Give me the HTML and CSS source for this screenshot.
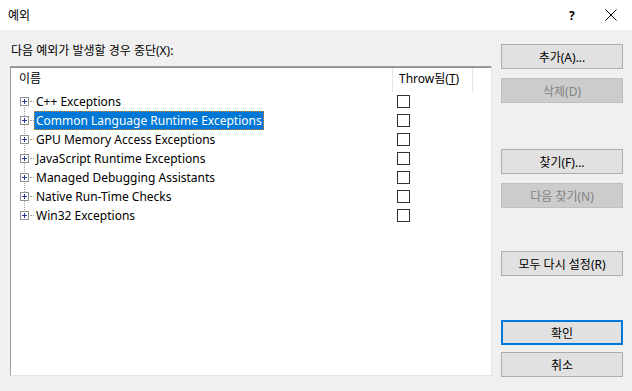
FILE: index.html
```html
<!DOCTYPE html>
<html lang="ko">
<head>
    <meta charset="UTF-8">
    <title>예외</title>
    <link rel="stylesheet" href="styles.css">
</head>
<body>
    <div class="dialog">
        <div class="title-bar">
            <span class="title">예외</span>
            <span class="title-help">?</span>
            <span class="title-close">
                <svg width="12" height="12" viewBox="0 0 12 12"><path d="M0.5 0.5 L11.5 11.5 M11.5 0.5 L0.5 11.5" stroke="#000" stroke-width="1" fill="none"/></svg>
            </span>
        </div>
        <div class="content">
            <div class="left-pane">
                <div class="list-label">다음 예외가 발생할 경우 중단(X):</div>
                <div class="list-box">
                    <div class="list-header">
                        <div class="col-name">이름</div>
                        <div class="col-throw">Throw됨(<u>T</u>)</div>
                        <div class="col-rest"></div>
                    </div>
                    <div class="tree">
                        <div class="tree-line"></div>
                        <div class="tree-row">
                            <span class="expander"></span><span class="dash"></span>
                            <span class="node-text">C++ Exceptions</span>
                            <span class="check"></span>
                        </div>
                        <div class="tree-row">
                            <span class="expander"></span><span class="dash"></span>
                            <span class="node-text selected">Common Language Runtime Exceptions</span>
                            <span class="check"></span>
                        </div>
                        <div class="tree-row">
                            <span class="expander"></span><span class="dash"></span>
                            <span class="node-text">GPU Memory Access Exceptions</span>
                            <span class="check"></span>
                        </div>
                        <div class="tree-row">
                            <span class="expander"></span><span class="dash"></span>
                            <span class="node-text">JavaScript Runtime Exceptions</span>
                            <span class="check"></span>
                        </div>
                        <div class="tree-row">
                            <span class="expander"></span><span class="dash"></span>
                            <span class="node-text">Managed Debugging Assistants</span>
                            <span class="check"></span>
                        </div>
                        <div class="tree-row">
                            <span class="expander"></span><span class="dash"></span>
                            <span class="node-text">Native Run-Time Checks</span>
                            <span class="check"></span>
                        </div>
                        <div class="tree-row">
                            <span class="expander"></span><span class="dash"></span>
                            <span class="node-text">Win32 Exceptions</span>
                            <span class="check"></span>
                        </div>
                    </div>
                </div>
            </div>
            <div class="button-pane">
                <button class="btn">추가(A)...</button>
                <button class="btn" disabled>삭제(D)</button>
                <button class="btn gap-find">찾기(F)...</button>
                <button class="btn" disabled>다음 찾기(N)</button>
                <button class="btn gap-reset">모두 다시 설정(R)</button>
                <button class="btn btn-default gap-ok">확인</button>
                <button class="btn">취소</button>
            </div>
        </div>
    </div>
</body>
</html>
```

FILE: styles.css
```css
body {
    margin: 0;
    padding: 0;
    background: #f0f0f0;
    font-family: "Noto Sans", "Noto Sans CJK KR", sans-serif;
    font-size: 12px;
    color: #000;
}
.dialog {
    width: 632px;
    height: 391px;
    overflow: hidden;
}
.title-bar {
    height: 30px;
    background: #fff;
    display: flex;
    align-items: center;
}
.title {
    margin-left: 8px;
    flex: 1;
    font-size: 12px;
}
.title-help {
    width: 14px;
    margin-right: 22px;
    font-size: 12px;
    font-weight: bold;
}
.title-close {
    display: flex;
    margin-right: 15px;
}
.content {
    display: flex;
    padding-left: 10px;
}
.left-pane {
    width: 482px;
}
.list-label {
    height: 17px;
    margin-top: 12px;
    margin-left: 1px;
    line-height: 17px;
}
.list-box {
    margin-top: 7px;
    height: 310px;
    box-sizing: border-box;
    background: #fff;
    border-top: 1px solid #a0a0a0;
    border-left: 1px solid #a0a0a0;
    border-right: 1px solid #e3e3e3;
    border-bottom: 1px solid #e3e3e3;
}
.list-header {
    display: flex;
    height: 24px;
    border-top: 1px solid #909090;
}
.list-header div {
    line-height: 22px;
}
.col-name {
    width: 382px;
    padding-left: 8px;
    box-sizing: border-box;
    border-right: 1px solid #e5e5e5;
}
.col-throw {
    width: 80px;
    padding-left: 6px;
    box-sizing: border-box;
    border-right: 1px solid #e5e5e5;
}
.tree {
    position: relative;
}
.tree-line {
    position: absolute;
    left: 13px;
    top: 10px;
    height: 114px;
    border-left: 1px dotted #a0a0a0;
}
.tree-row {
    display: flex;
    align-items: center;
    height: 19px;
    position: relative;
}
.expander {
    width: 7px;
    height: 7px;
    margin-left: 9px;
    border: 1px solid #919191;
    background: #fff linear-gradient(#2a3b8f, #2a3b8f) center / 5px 1px no-repeat;
    position: relative;
    z-index: 1;
}
.expander::after {
    content: "";
    position: absolute;
    left: 3px;
    top: 1px;
    width: 1px;
    height: 5px;
    background: #2a3b8f;
}
.dash {
    width: 4px;
    margin-left: 1px;
    border-top: 1px dotted #a0a0a0;
}
.node-text {
    margin-left: 0;
    width: 362px;
    line-height: 17px;
    padding-left: 1px;
    box-sizing: border-box;
    border: 1px solid transparent;
}
.node-text.selected {
    width: auto;
    margin-right: auto;
    padding-right: 1px;
    background: #0078d7;
    color: #fff;
    border: 1px dotted #d08020;
}
.check {
    position: absolute;
    left: 386px;
    width: 11px;
    height: 11px;
    border: 1px solid #333;
    background: #fff;
}
.button-pane {
    display: flex;
    flex-direction: column;
    margin-left: 9px;
    padding-top: 14px;
}
.btn {
    width: 122px;
    height: 25px;
    margin-bottom: 9px;
    background: #e1e1e1;
    border: 1px solid #adadad;
    font-family: "Noto Sans", "Noto Sans CJK KR", sans-serif;
    font-size: 12px;
    color: #000;
    padding: 0;
}
.btn:disabled {
    background: #cccccc;
    border-color: #bfbfbf;
    color: #838383;
}
.btn-default {
    border: 2px solid #0078d7;
}
.gap-find {
    margin-top: 37px;
}
.gap-reset {
    margin-top: 34px;
}
.gap-ok {
    margin-top: 35px;
    margin-bottom: 7px;
}
```
